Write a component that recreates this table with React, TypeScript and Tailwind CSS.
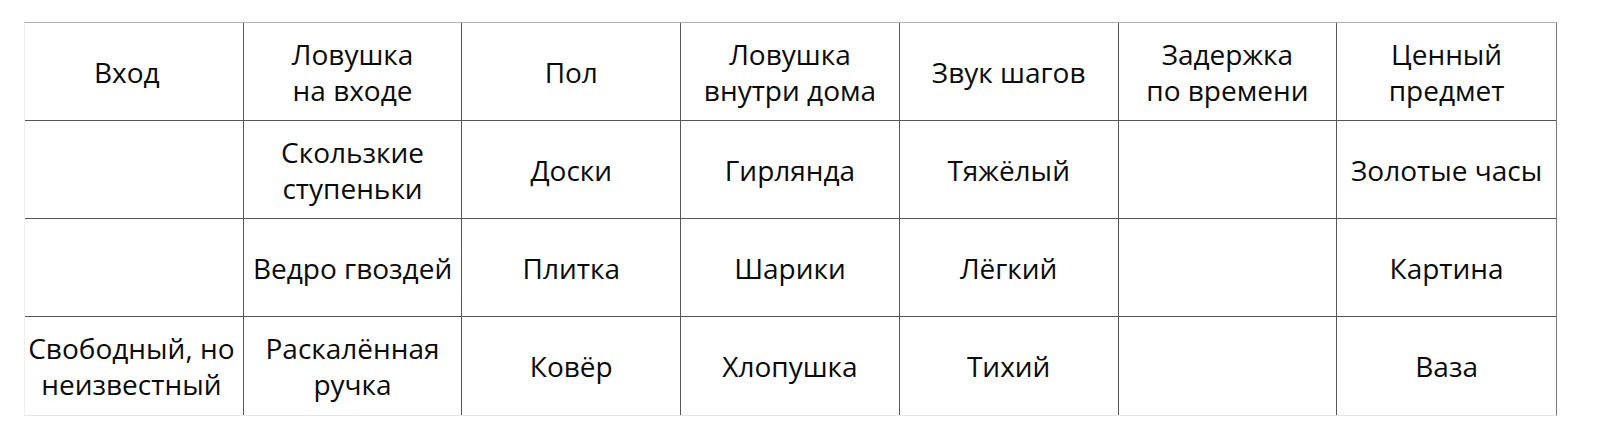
import React from 'react'

const header: string[][] = [
  ['Вход'],
  ['Ловушка', 'на входе'],
  ['Пол'],
  ['Ловушка', 'внутри дома'],
  ['Звук шагов'],
  ['Задержка', 'по времени'],
  ['Ценный', 'предмет'],
]

const rows: string[][][] = [
  [[], ['Скользкие', 'ступеньки'], ['Доски'], ['Гирлянда'], ['Тяжёлый'], [], ['Золотые часы']],
  [[], ['Ведро гвоздей'], ['Плитка'], ['Шарики'], ['Лёгкий'], [], ['Картина']],
  [['Свободный, но', 'неизвестный'], ['Раскалённая', 'ручка'], ['Ковёр'], ['Хлопушка'], ['Тихий'], [], ['Ваза']],
]

const Cell = ({ lines, first, head, lastCol, lastRow }: { lines: string[]; first: boolean; head: boolean; lastCol: boolean; lastRow: boolean }) => (
  <td
    className={`h-[98px] text-center align-middle border-[#555] ${first ? (head ? 'pl-0.5 pr-[16px]' : 'pl-0 pr-[5px]') : 'px-0.5'} ${lastCol ? '' : 'border-r'} ${lastRow ? '' : 'border-b'}`}
  >
    {lines.map((l, i) => (
      <div key={i} className="whitespace-nowrap">{l}</div>
    ))}
  </td>
)

export default function App() {
  const all = [header, ...rows]
  return (
    <div className="w-[1600px] h-[440px] bg-white pt-[22px] pl-[24px]" style={{ fontFamily: '"Open Sans", sans-serif' }}>
      <table className="table-fixed w-[1533px] border-separate border-spacing-0 border border-t-[#b3b3b3] border-l-[#f0f0f0] border-b-[#e6e6e6] border-r-[#777] text-[28px] leading-[36px] text-[#0a0a0a]">
        <tbody>
          {all.map((r, ri) => (
            <tr key={ri}>
              {r.map((c, ci) => (
                <Cell
                  key={ci}
                  lines={c}
                  first={ci === 0}
                  head={ri === 0}
                  lastCol={ci === r.length - 1}
                  lastRow={ri === all.length - 1}
                />
              ))}
            </tr>
          ))}
        </tbody>
      </table>
    </div>
  )
}
